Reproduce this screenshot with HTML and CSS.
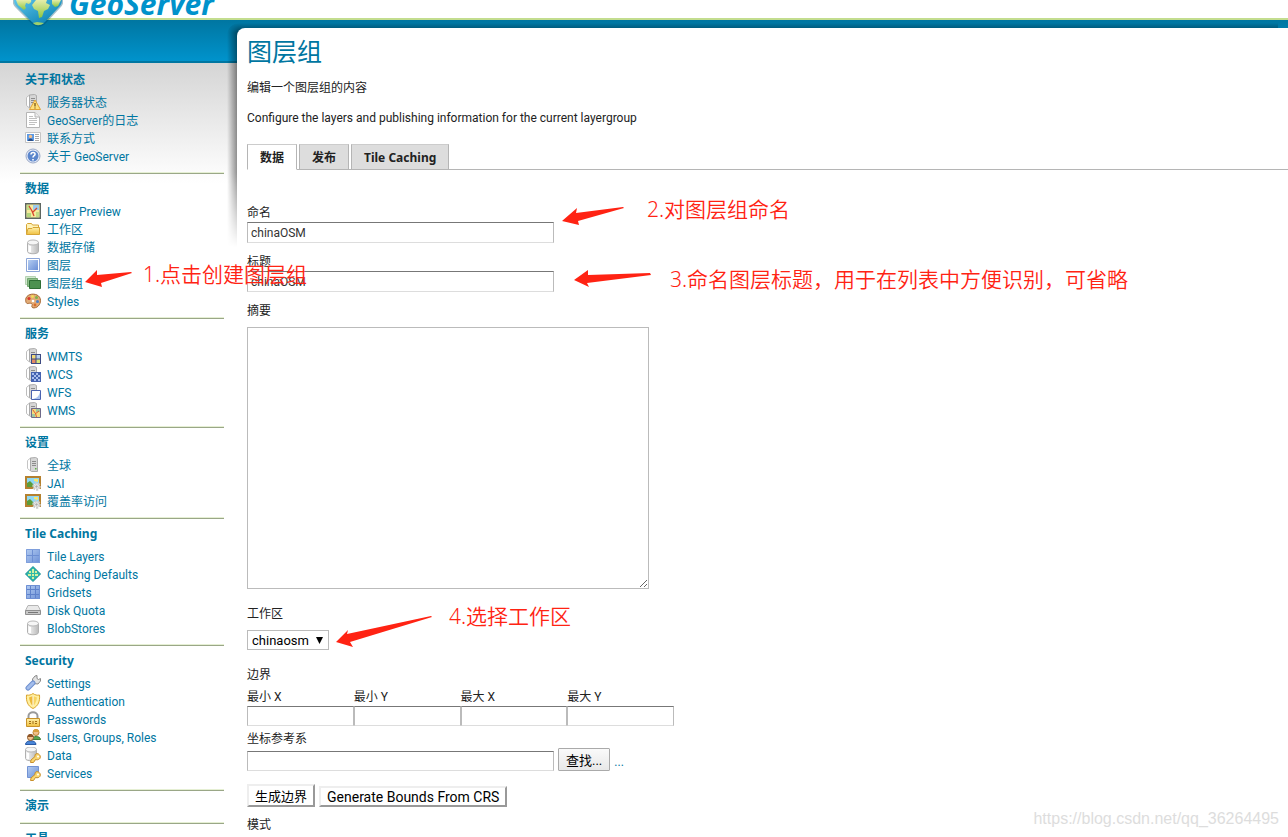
FILE: index.html
```
<!DOCTYPE html>
<html lang="zh-CN">
<head>
  <meta charset="UTF-8">
  <title>GeoServer: 图层组</title>
  <meta name="viewport" content="width=device-width, initial-scale=1">
  <link rel="stylesheet" href="styles.css">
</head>
<body>

<!-- icon sprite -->
<svg class="sprite" aria-hidden="true">
  <defs>
    <linearGradient id="metal"><stop offset="0" stop-color="#fafafa"/><stop offset="1" stop-color="#b9b9b9"/></linearGradient>
    <linearGradient id="blue" x2="1" y2="1"><stop offset="0" stop-color="#b4cdf2"/><stop offset="1" stop-color="#6b8fd6"/></linearGradient>
    <linearGradient id="gold" x2="0" y2="1"><stop offset="0" stop-color="#fff0a8"/><stop offset="1" stop-color="#f0c040"/></linearGradient>
    <linearGradient id="gem" x2="1" y2="1"><stop offset="0" stop-color="#5cc4ea"/><stop offset="1" stop-color="#0079ab"/></linearGradient>
    <linearGradient id="leaf" x2="0" y2="1"><stop offset="0" stop-color="#e6edaa"/><stop offset="1" stop-color="#8cc63f"/></linearGradient>
  </defs>
  <symbol id="tower" viewBox="0 0 16 16">
    <path d="M1.500 3.500 4.500 1V14L1.500 11.500z" fill="#fff" stroke="#bdbdbd"/>
    <path d="M4.500 1 9.500.500l2 1V14.500h-6l-1-1z" fill="#d6d6d6" stroke="#ababab"/>
    <path d="M6 4.500h4M6 6.500h4M6 8.500h4" stroke="#8c8c8c"/>
  </symbol>
  <symbol id="cylinder" viewBox="0 0 16 16">
    <path d="M2.500 3.500v9c0 3 11 3 11 0v-9" fill="url(#metal)" stroke="#b0b0b0"/>
    <ellipse cx="8" cy="3.500" rx="5.500" ry="2.500" fill="#f6f6f6" stroke="#b8b8b8"/>
    <path d="M5 7v6" stroke="#fff" stroke-width="2"/>
  </symbol>
  <symbol id="key" viewBox="0 0 16 16">
    <path d="m5.500 15.500.500-2.500 4-3.500C9.500 7 11.500 6 13.500 7c2.500 1.500 2.500 4.500 0 5.500-1 .500-2 .300-3 0L8.500 15.500z" fill="#f9d66e" stroke="#c88f2c" stroke-linejoin="round"/>
    <circle cx="13" cy="9.500" r="1" fill="#fff"/>
  </symbol>
  <symbol id="status" viewBox="0 0 16 16">
    <use href="#tower"/>
    <path d="M10 6 15.500 15.500H4.500z" fill="#ffe07a" stroke="#dfa237" stroke-linejoin="round"/>
    <path d="M10 9v3.500M10 13.500v1" stroke="#6b4a10" stroke-width="1.200"/>
  </symbol>
  <symbol id="log" viewBox="0 0 16 16">
    <path d="M1.500.500H10L14.500 5v10.500h-13z" fill="#fff" stroke="#b5b5b5"/>
    <path d="M10 .500V5h4.500" fill="#eee" stroke="#b5b5b5"/>
    <path d="M4 4.500h4M4 6.500h8M4 8.500h8M4 10.500h8M4 12.500h6" stroke="#c0c0c0"/>
  </symbol>
  <symbol id="contact" viewBox="0 0 16 16">
    <path d="M.500 2.500h15v10H.500z" fill="#fff" stroke="#c5c5c5"/>
    <path d="M2 4h7v7H2z" fill="#5d9ae4"/>
    <circle cx="5.500" cy="6.500" r="1.700" fill="#f3c08c"/>
    <path d="M3 11c0-3.500 5-3.500 5 0" fill="#2c4f86"/>
    <path d="M10 4.500h4M10 6.500h4M10 8.500h4M10 10.500h4" stroke="#aaa"/>
  </symbol>
  <symbol id="help" viewBox="0 0 16 16">
    <circle cx="8" cy="8" r="7" fill="#e9eef8" stroke="#9aa9c8"/>
    <circle cx="8" cy="8" r="5.500" fill="#5b86cc"/>
    <path d="M6 6.500c0-3 4.500-2.500 4 0-.200 1.300-2 1.300-2 3M8 11v1.500" fill="none" stroke="#fff" stroke-width="1.600"/>
  </symbol>
  <symbol id="preview" viewBox="0 0 16 16">
    <path d="M.700.700h14.600v14.600H.700z" fill="#f6eb9c" stroke="#5d6661" stroke-width="1.400"/>
    <path d="M2 2h3v5H2z" fill="#c3dd85"/><path d="M8 2h6v5H8z" fill="#9ccbec"/><path d="M2 10h4v4H2z" fill="#b4d67d"/><path d="M11 9h3v5h-3z" fill="#c4dc84"/>
    <path d="m4 3 3 5 2 5M12 5 8 9" fill="none" stroke="#d8452f" stroke-width="1.300"/>
  </symbol>
  <symbol id="folder" viewBox="0 0 16 16">
    <path d="M1.500 13V3.500l1-1h4l1 1.500h6v9z" fill="#fff3b8" stroke="#d6a536"/>
    <path d="M1.500 13.500 3 7.500h4l1-1h6.500v7z" fill="url(#gold)" stroke="#d6a536"/>
  </symbol>
  <symbol id="layer" viewBox="0 0 16 16">
    <path d="M1.500 1.500h13v13h-13z" fill="#fff" stroke="#8da6d8"/>
    <path d="M3 3h10v10H3z" fill="url(#blue)"/>
  </symbol>
  <symbol id="group" viewBox="0 0 16 16">
    <path d="M.500 1.500h10v8H.500z" fill="#d3e8d1" stroke="#b5d2b2"/>
    <path d="M2.500 3.500h10v8h-10z" fill="#8ebf8b" stroke="#74a871"/>
    <path d="M4.500 5.500h11v8h-11z" fill="#4d9150" stroke="#2f6e35"/>
  </symbol>
  <symbol id="palette" viewBox="0 0 16 16">
    <path d="M1 5C3 .500 10 0 13.500 3c3.500 3 2 9-1.500 11-3 1.700-6 1-5-1.500S5 10 3 10.500.200 8 1 5z" fill="#e2ab76" stroke="#a86a35"/>
    <circle cx="4" cy="5.500" r="1.600" fill="#d8392b"/><circle cx="7.500" cy="3.500" r="1.400" fill="#f5dc56"/><circle cx="11.500" cy="4.500" r="1.500" fill="#7bb24a"/><circle cx="12.500" cy="8.500" r="1.500" fill="#4a7fc9"/><circle cx="8" cy="8" r="1.300" fill="#fff"/><circle cx="10" cy="12" r="1.400" fill="#d86b2b"/>
  </symbol>
  <symbol id="wmts" viewBox="0 0 16 16">
    <use href="#tower"/>
    <path d="M6 6h10v10H6z" fill="#3d4a82"/>
    <path d="M7 7h3.500v3.500H7z" fill="#f2d977"/><path d="M11.500 7H15v3.500h-3.500z" fill="#b9d3ee"/><path d="M7 11.500h3.500V15H7z" fill="#e48a63"/><path d="M11.500 11.500H15V15h-3.500z" fill="#dbe57d"/>
  </symbol>
  <symbol id="wcs" viewBox="0 0 16 16">
    <use href="#tower"/>
    <path d="M6 6h10v10H6z" fill="#4663b0"/>
    <path d="M7 7h2v2H7zM11 7h2v2h-2zM9 9h2v2H9zM13 9h2v2h-2zM7 11h2v2H7zM11 11h2v2h-2zM9 13h2v2H9zM13 13h2v2h-2z" fill="#a9bfee"/>
  </symbol>
  <symbol id="wfs" viewBox="0 0 16 16">
    <use href="#tower"/>
    <path d="M6.500 6.500h9v9h-9z" fill="#fff" stroke="#4a63b0"/>
    <path d="M15 8v7H8c4-1 6-3 7-7z" fill="#a9c2ee"/>
  </symbol>
  <symbol id="wms" viewBox="0 0 16 16">
    <use href="#tower"/>
    <path d="M6.500 6.500h9v9h-9z" fill="#f3dc7d" stroke="#6f6a8a"/>
    <path d="M11 7h4v3h-4zM7 12h3v3H7z" fill="#9fc9a0"/>
    <path d="m7.500 7.500 3 4 1 3.500M14 9l-4 3" stroke="#dc5b34" fill="none"/>
  </symbol>
  <symbol id="server" viewBox="0 0 16 16">
    <path d="M2.500 3.500 5.500 1V14l-3-2.500z" fill="#fff" stroke="#c5c5c5"/>
    <path d="M5.500 1l5-.500 2 1V14.500h-6l-1-1z" fill="#d6d6d6" stroke="#ababab"/>
    <path d="M7 4.500h4M7 6.500h4M7 8.500h4" stroke="#8c8c8c"/><path d="M10 11h1.500v1.500H10z" fill="#5db146"/>
  </symbol>
  <symbol id="jai" viewBox="0 0 16 16">
    <path d="M1 2h14v11H1z" fill="#8fd8f5" stroke="#b5812f" stroke-width="2"/>
    <path d="M2 12V8l3-2 4 4 5 1v1z" fill="#5c9c3a"/><path d="M9 4h4v3L9 6z" fill="#f8e66e"/>
    <circle cx="11.500" cy="11.500" r="3" fill="#f4f4f4" stroke="#ccc" stroke-width="2.500" stroke-dasharray="2 1"/>
    <circle cx="11.500" cy="11.500" r="1.200" fill="#aaa"/>
  </symbol>
  <symbol id="tiles" viewBox="0 0 16 16">
    <path d="M1 1h14v14H1z" fill="url(#blue)"/>
    <path d="M7.500 1v14M1 7.500h14" stroke="#6d8fd3"/><path d="M1.500 1.500h13v13h-13z" fill="none" stroke="#7f9fdc"/>
  </symbol>
  <symbol id="cache" viewBox="0 0 16 16">
    <path d="M8 .500 15.500 8 8 15.500.500 8z" fill="#2fb9a8" stroke="#128a92" stroke-linejoin="round"/>
    <path d="M4 5h2v2H4zM7 3h2v4H7zM10 5h2v2h-2zM3 8h3v2H3zM7 8h2v2H7zM10 8h3v2h-3zM7 11h2v2H7z" fill="#d3f0a2"/>
  </symbol>
  <symbol id="grid" viewBox="0 0 16 16">
    <path d="M1 1h14v14H1z" fill="url(#blue)"/>
    <path d="M5.500 1v14M10.500 1v14M1 5.500h14M1 10.500h14" stroke="#5f82cb"/><path d="M1.500 1.500h13v13h-13z" fill="none" stroke="#6f90d4"/>
  </symbol>
  <symbol id="disk" viewBox="0 0 16 16">
    <path d="M3 3.500h10l2.500 5h-15z" fill="#e9e9e9" stroke="#b5b5b5"/>
    <path d="M.500 8.500h15v4H.500z" fill="#c8c8c8" stroke="#8f8f8f"/>
    <path d="M3 10.500h10" stroke="#777"/>
  </symbol>
  <symbol id="wrench" viewBox="0 0 16 16">
    <path d="M8 8.500 7.500 4 10 1l2-.500v3l1.500 1 2-1V6L13 9z" fill="#e2e2e2" stroke="#8a8a8a"/>
    <path d="m3 13 5-5" stroke="#6d8fcf" stroke-width="5" stroke-linecap="round"/>
    <path d="m3 13 5-5" stroke="#a3bdeb" stroke-width="3" stroke-linecap="round"/>
  </symbol>
  <symbol id="shield" viewBox="0 0 16 16">
    <path d="M8 .500c2 1.500 4 2 6.500 1.500C15 8 13.500 13 8 15.500 2.500 13 1 8 1.500 2 4 2.500 6 2 8 .500z" fill="#fff0a0" stroke="#dba52d"/>
    <path d="M4 4.500c1 5 2 7 4 8.500V3z" fill="#edb93a"/><path d="M12 4.500c-1 5-2 7-4 8.500V3z" fill="#f7d463"/><path d="M8 3v10" stroke="#fff"/>
  </symbol>
  <symbol id="lock" viewBox="0 0 16 16">
    <path d="M3.500 8V5c0-5 9-5 9 0v3" fill="none" stroke="#999" stroke-width="2"/>
    <path d="M1.500 7.500h13v8h-13z" fill="url(#gold)" stroke="#c8922a"/>
    <path d="M4 10.500h2M10 10.500h2M4 12.500h2M10 12.500h2M8 10v3" stroke="#a06e14"/>
  </symbol>
  <symbol id="users" viewBox="0 0 16 16">
    <path d="M7 10.500c0-4 8.500-4 8.500 0z" fill="#5ea64f" stroke="#3f7d35"/>
    <circle cx="11" cy="3.500" r="3" fill="#f0c08c" stroke="#b98430"/><path d="M8 3c0-4 6-4 6 0z" fill="#d9a03c"/>
    <path d="M.500 15.500c0-5 10.500-5 10.500 0z" fill="#4a86d8" stroke="#2a5aa5"/>
    <circle cx="5.500" cy="8.500" r="3" fill="#f0c08c" stroke="#8c5a2c"/><path d="M2.500 8c0-4 6-4 6 0z" fill="#8e5526"/>
  </symbol>
  <symbol id="datakey" viewBox="0 0 16 16"><use href="#cylinder" x="-2" y="-1" width="16" height="16"/><use href="#key"/></symbol>
  <symbol id="servkey" viewBox="0 0 16 16"><path d="M2.500 1.500h11v11h-11z" fill="url(#blue)" stroke="#7293d4"/><use href="#key"/></symbol>
</svg>

<div class="page">
  <header class="header">
    <a class="logo" href="#">
      <svg class="globe" width="50" height="28" viewBox="0 0 50 28" aria-hidden="true">
        <path d="M0 0h50c1 3-1 6-3 8L33 23c-5 5-10 5-15 0L3 8C1 6-1 3 0 0z" fill="#00496a" opacity=".35"/>
        <path d="M1 0h48c0 3-1 5-3 7L32 22c-4 4-9 4-13 0L4 7C2 5 1 3 1 0z" fill="url(#gem)"/>
        <path d="M3 0h15c1 2-1 3-2 4l-3-1-1 3 1 2-2 2-6-5z" fill="url(#leaf)"/>
        <path d="M23 0h11l-1 3 4 2-2 4-4 2-2 6-3 1-1-7-4-2-2-4z" fill="url(#leaf)"/>
        <path d="M39 0h9l-3 6-3 1-3-3z" fill="url(#leaf)"/>
        <path d="m20 23 4-1 7 1c-4 3-8 3-11 0z" fill="#9fd06a"/>
      </svg>
      <span class="brand">GeoServer</span>
    </a>
  </header>

  <div class="wrap">
    <nav class="sidebar">
      <section>
        <h3>关于和状态</h3>
        <ul>
          <li><a href="#"><svg><use href="#status"/></svg>服务器状态</a></li>
          <li><a href="#"><svg><use href="#log"/></svg>GeoServer的日志</a></li>
          <li><a href="#"><svg><use href="#contact"/></svg>联系方式</a></li>
          <li><a href="#"><svg><use href="#help"/></svg>关于 GeoServer</a></li>
        </ul>
      </section>
      <section>
        <h3>数据</h3>
        <ul>
          <li><a href="#"><svg><use href="#preview"/></svg>Layer Preview</a></li>
          <li><a href="#"><svg><use href="#folder"/></svg>工作区</a></li>
          <li><a href="#"><svg><use href="#cylinder"/></svg>数据存储</a></li>
          <li><a href="#"><svg><use href="#layer"/></svg>图层</a></li>
          <li><a href="#"><svg><use href="#group"/></svg>图层组</a></li>
          <li><a href="#"><svg><use href="#palette"/></svg>Styles</a></li>
        </ul>
      </section>
      <section>
        <h3>服务</h3>
        <ul>
          <li><a href="#"><svg><use href="#wmts"/></svg>WMTS</a></li>
          <li><a href="#"><svg><use href="#wcs"/></svg>WCS</a></li>
          <li><a href="#"><svg><use href="#wfs"/></svg>WFS</a></li>
          <li><a href="#"><svg><use href="#wms"/></svg>WMS</a></li>
        </ul>
      </section>
      <section>
        <h3>设置</h3>
        <ul>
          <li><a href="#"><svg><use href="#server"/></svg>全球</a></li>
          <li><a href="#"><svg><use href="#jai"/></svg>JAI</a></li>
          <li><a href="#"><svg><use href="#jai"/></svg>覆盖率访问</a></li>
        </ul>
      </section>
      <section>
        <h3>Tile Caching</h3>
        <ul>
          <li><a href="#"><svg><use href="#tiles"/></svg>Tile Layers</a></li>
          <li><a href="#"><svg><use href="#cache"/></svg>Caching Defaults</a></li>
          <li><a href="#"><svg><use href="#grid"/></svg>Gridsets</a></li>
          <li><a href="#"><svg><use href="#disk"/></svg>Disk Quota</a></li>
          <li><a href="#"><svg><use href="#cylinder"/></svg>BlobStores</a></li>
        </ul>
      </section>
      <section>
        <h3>Security</h3>
        <ul>
          <li><a href="#"><svg><use href="#wrench"/></svg>Settings</a></li>
          <li><a href="#"><svg><use href="#shield"/></svg>Authentication</a></li>
          <li><a href="#"><svg><use href="#lock"/></svg>Passwords</a></li>
          <li><a href="#"><svg><use href="#users"/></svg>Users, Groups, Roles</a></li>
          <li><a href="#"><svg><use href="#datakey"/></svg>Data</a></li>
          <li><a href="#"><svg><use href="#servkey"/></svg>Services</a></li>
        </ul>
      </section>
      <section>
        <h3>演示</h3>
      </section>
      <section>
        <h3>工具</h3>
      </section>
    </nav>

    <main class="main">
      <h1>图层组</h1>
      <p>编辑一个图层组的内容</p>
      <p>Configure the layers and publishing information for the current layergroup</p>

      <div class="tabs">
        <button type="button" class="tab active">数据</button>
        <button type="button" class="tab">发布</button>
        <button type="button" class="tab">Tile Caching</button>
      </div>

      <form onsubmit="return false">
        <div class="field">
          <label for="name">命名</label>
          <input type="text" id="name" value="chinaOSM">
        </div>
        <div class="field">
          <label for="title">标题</label>
          <input type="text" id="title" value="chinaOSM">
        </div>
        <div class="field spaced">
          <label for="abstract">摘要</label>
          <textarea id="abstract"></textarea>
        </div>
        <div class="field spaced">
          <label for="workspace">工作区</label>
          <select id="workspace"><option>chinaosm</option></select>
        </div>
        <fieldset>
          <legend>边界</legend>
          <div class="bounds">
            <div><label for="minx">最小 X</label><input type="text" id="minx"></div>
            <div><label for="miny">最小 Y</label><input type="text" id="miny"></div>
            <div><label for="maxx">最大 X</label><input type="text" id="maxx"></div>
            <div><label for="maxy">最大 Y</label><input type="text" id="maxy"></div>
          </div>
        </fieldset>
        <label for="srs">坐标参考系</label>
        <div class="row">
          <input type="text" id="srs">
          <button type="button" class="find">查找...</button>
          <a href="#">...</a>
        </div>
        <div class="row actions">
          <button type="button" class="generate">生成边界</button>
          <button type="button" class="generate from-crs">Generate Bounds From CRS</button>
        </div>
        <div class="field spaced">
          <label for="mode">模式</label>
          <select id="mode"><option>Single</option></select>
        </div>
      </form>
    </main>
  </div>

  <!-- step notes lying over the form -->
  <div class="notes">
    <svg class="arrows" aria-hidden="true">
      <path d="M85 282 97 270 97 275 131 272 132 273 101 283 102 287z"/>
      <path d="M562 221 577 208 576 213 623 207 624 208 578 221 579 225z"/>
      <path d="M574 280 588 270 588 275 650 273 651 275 587 283 589 287z"/>
      <path d="M336 642 348 630 347 634 431 616 432 617 350 642 353 647z"/>
    </svg>
    <span class="note note-create">1.点击创建图层组</span>
    <span class="note note-name">2.对图层组命名</span>
    <span class="note note-title">3.命名图层标题，用于在列表中方便识别，可省略</span>
    <span class="note note-workspace">4.选择工作区</span>
    <span class="watermark">https://blog.csdn.net/qq_36264495</span>
  </div>
</div>

</body>
</html>
```
FILE: styles.css
```
* {
  box-sizing: border-box;
}

body {
  margin: 0;
  height: 100vh;
  overflow: hidden;
  background: #fff;
  color: #222;
  font-family: Roboto, "Noto Sans CJK SC", sans-serif;
  font-size: 12px;
  line-height: 18px;
}

a {
  color: #0076a1;
  text-decoration: none;
}

.sprite {
  position: absolute;
  width: 0;
  height: 0;
}

.page {
  position: relative;
  height: 100%;
  overflow: hidden;
}

/* header */
.header {
  position: relative;
  z-index: 2;
  height: 20px;
  padding-left: 13px;
  border-bottom: 2px solid #c3dd8f;
}

.logo {
  display: flex;
  align-items: flex-start;
  gap: 6px;
}

.globe {
  flex: none;
}

.brand {
  margin-top: -16px;
  color: #0092cb;
  font-family: "Open Sans", sans-serif;
  font-size: 30px;
  font-style: italic;
  font-weight: 700;
  line-height: 40px;
}

.wrap {
  position: relative;
  z-index: 0;
  display: flex;
  align-items: flex-start;
  background: linear-gradient(#0076a1, #0093cc 41px, #0076a1 41px, #0076a1 43px, transparent 43px);
}

/* sidebar */
.sidebar {
  position: relative;
  z-index: -2;
  flex: 0 0 237px;
  margin-top: 43px;
  padding: 3px 13px 0 20px;
  background: linear-gradient(#d5d5d5, #fff 120px);
}
.sidebar section {
  padding: 5px 5px 3px;
  border-bottom: 1px solid #9aa787;
  box-shadow: inset 0 -1px #e5efd3;
  margin-bottom: 1px;
}
.sidebar h3 {
  margin: 0 0 5px;
  color: #0076a1;
  font-family: "Noto Sans", "Noto Sans CJK SC", sans-serif;
  font-size: 12px;
}
.sidebar ul {
  margin: 0;
  padding: 0 0 4px;
  list-style: none;
}
.sidebar li a {
  display: flex;
  gap: 6px;
  height: 18px;
}
.sidebar li svg {
  width: 16px;
  height: 16px;
}

/* content */
.main {
  position: relative;
  flex: 1;
  margin-top: 8px;
  padding: 9px 0 0 10px;
  border-radius: 8px 0 0 0;
  background: #fff;
}
.main::before {
  content: "";
  position: absolute;
  z-index: -1;
  top: -5px;
  left: -10px;
  width: 100%;
  height: 224px;
  border-radius: 12px 0 0 0;
  background: linear-gradient(90deg, transparent, rgba(0, 0, 0, 0.5) 12px);
  -webkit-mask-image: linear-gradient(transparent, #000 10px, #000 150px, transparent);
  mask-image: linear-gradient(transparent, #000 10px, #000 150px, transparent);
}

h1 {
  margin: 0 0 10px;
  color: #0076a1;
  font-size: 25px;
  font-weight: 400;
  line-height: 32px;
}

p {
  margin: 0 0 12px;
}

.tabs {
  display: flex;
  gap: 2px;
  height: 26px;
  margin: 17px 0 34px;
  box-shadow: inset 0 -1px #b5b5b5;
}
.tab {
  padding: 0 12px;
  border: 1px solid #b5b5b5;
  border-top-color: #ccc;
  background: #ddd;
  color: #222;
  font: bold 12px "Noto Sans", "Noto Sans CJK SC", sans-serif;
}
.tab.active {
  border-bottom-color: #fff;
  background: #fff;
}

label,
legend {
  display: block;
  height: 18px;
  padding: 0;
}

input,
textarea,
select {
  border: 1px solid #bbb;
  border-radius: 0;
  background: #fff;
  color: #333;
  font: 12px Roboto, "Noto Sans CJK SC", sans-serif;
}

input {
  display: block;
  height: 21px;
  padding: 0 3px;
  border-color: #777 #bbb #ddd;
}

.field {
  margin-bottom: 10px;
}
.field input,
.row input {
  width: 307px;
}

.spaced {
  margin-bottom: 16px;
}
.spaced label {
  margin-bottom: 7px;
}

textarea {
  display: block;
  width: 402px;
  height: 262px;
}

select {
  display: block;
  height: 20px;
  padding: 0 19px 0 4px;
  appearance: none;
  background: #fff url("data:image/svg+xml,%3Csvg xmlns='http://www.w3.org/2000/svg' width='7' height='7'%3E%3Cpath d='M0 0h7L3.500 7z'/%3E%3C/svg%3E") no-repeat right 5px center;
  color: #000;
  font-size: 13px;
}

fieldset {
  margin: 0;
  padding: 0;
  border: 0;
}
legend {
  margin-bottom: 4px;
}

.bounds {
  display: flex;
  width: 427px;
  margin-bottom: 4px;
}
.bounds div {
  flex: 1;
}
.bounds input {
  width: 100%;
  height: 20px;
}

.row {
  display: flex;
  align-items: flex-end;
  gap: 4px;
}
.row input {
  height: 20px;
}

button {
  color: #000;
  font: 13px Roboto, "Noto Sans CJK SC", sans-serif;
}

.find {
  height: 23px;
  padding: 0 7px;
  border: 1px solid #aaa;
  border-radius: 1px;
  background: linear-gradient(#fafafa, #e8e8e8);
}

.actions {
  margin: 13px 0 9px;
}

.generate {
  height: 23px;
  padding: 0 6px;
  border: 2px solid;
  border-color: #eee #999 #999 #eee;
  background: #fff;
}
.from-crs {
  height: 21px;
  font-size: 14px;
}

/* step notes */
.notes {
  position: absolute;
  z-index: 3;
  inset: 0;
  pointer-events: none;
}
.arrows {
  width: 100%;
  height: 100%;
  fill: #ff2313;
}
.note {
  position: absolute;
  color: #ff2313;
  font-family: "Noto Sans", "Noto Sans CJK SC", sans-serif;
  font-size: 21px;
  font-weight: 350;
  line-height: 30px;
  white-space: nowrap;
}
.note-create {
  top: 259px;
  left: 143px;
}
.note-name {
  top: 194px;
  left: 647px;
}
.note-title {
  top: 264px;
  left: 670px;
}
.note-workspace {
  top: 601px;
  left: 449px;
}
.watermark {
  position: absolute;
  right: 9px;
  bottom: 9px;
  color: #ddd;
  font-family: "Liberation Sans", sans-serif;
  font-size: 16px;
}
```
